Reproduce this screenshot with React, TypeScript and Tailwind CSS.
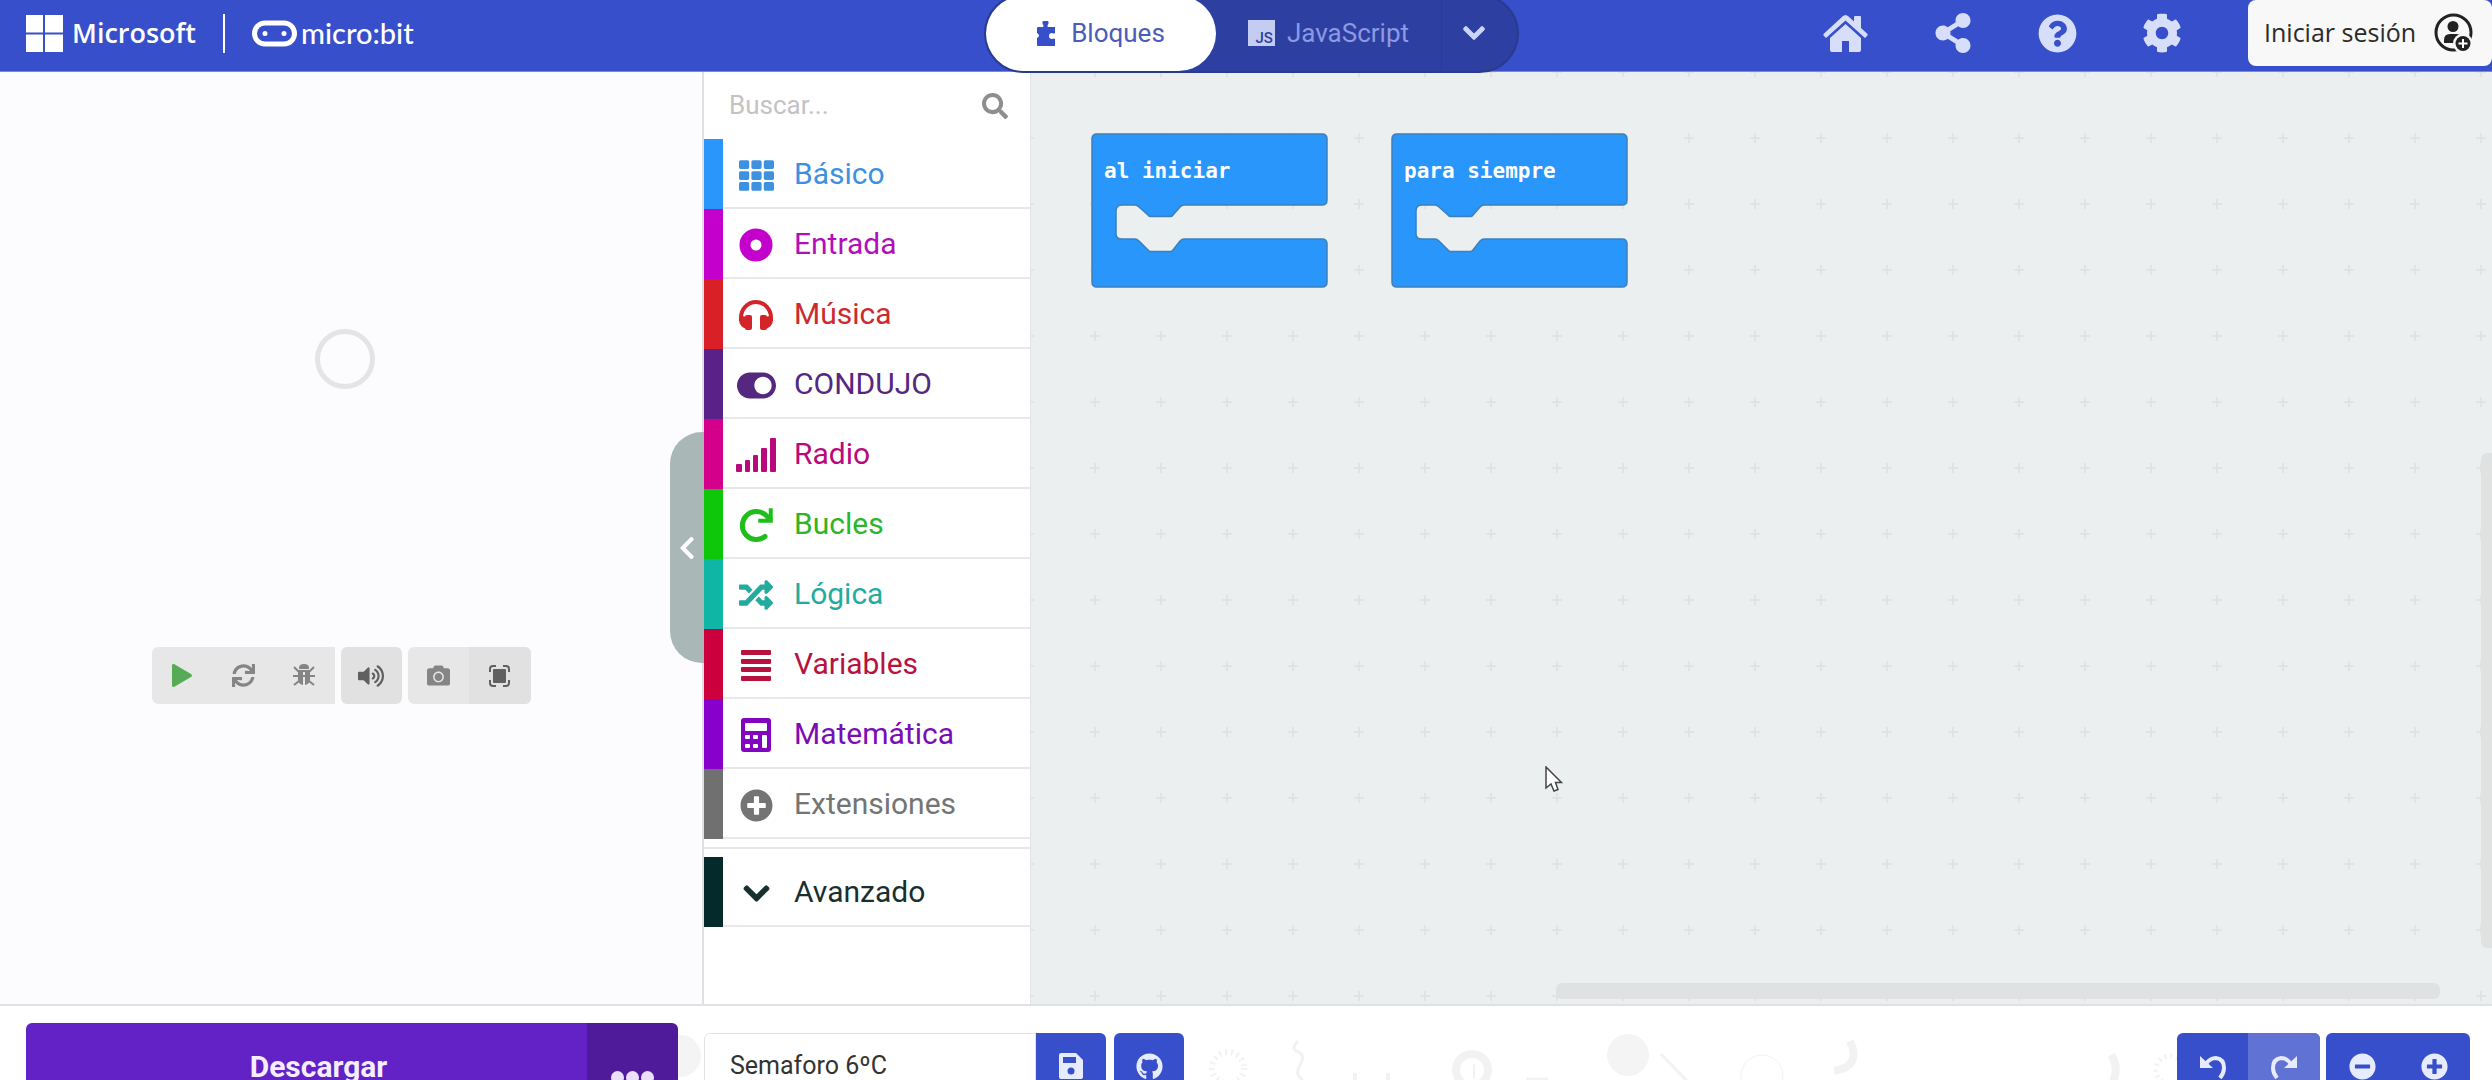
import type { ReactNode } from 'react';
import {
  FaCamera,
  FaChevronDown,
  FaChevronLeft,
  FaCog,
  FaGithub,
  FaMinusCircle,
  FaPlusCircle,
  FaQuestionCircle,
  FaRandom,
  FaSearch,
  FaShareAlt,
  FaSync,
  FaTh,
  FaToggleOn,
  FaVolumeUp,
} from 'react-icons/fa';

interface Category {
  name: string;
  text: string;
  bar: string;
  icon: ReactNode;
}

const categories: Category[] = [
  { name: 'Básico', text: 'text-[#3d91e0]', bar: 'bg-[#2a96fb]', icon: <FaTh size={35} /> },
  { name: 'Entrada', text: 'text-[#b20fb8]', bar: 'bg-[#c400cc]', icon: <DiscIcon /> },
  { name: 'Música', text: 'text-[#cd2a2e]', bar: 'bg-[#d82026]', icon: <HeadphonesIcon /> },
  { name: 'CONDUJO', text: 'text-[#56277f]', bar: 'bg-[#5a2189]', icon: <FaToggleOn size={39} /> },
  { name: 'Radio', text: 'text-[#b80a7c]', bar: 'bg-[#d4008c]', icon: <SignalIcon /> },
  { name: 'Bucles', text: 'text-[#2cb42a]', bar: 'bg-[#0fc70a]', icon: <LoopIcon /> },
  { name: 'Lógica', text: 'text-[#23ab9f]', bar: 'bg-[#0fb5a5]', icon: <FaRandom size={34} /> },
  { name: 'Variables', text: 'text-[#b8123f]', bar: 'bg-[#cc003c]', icon: <LinesIcon /> },
  { name: 'Matemática', text: 'text-[#7a0db4]', bar: 'bg-[#8800cc]', icon: <CalculatorIcon /> },
  { name: 'Extensiones', text: 'text-[#747474]', bar: 'bg-[#707070]', icon: <FaPlusCircle size={33} /> },
];

function DiscIcon() {
  return (
    <svg width="34" height="34" viewBox="0 0 34 34">
      <circle cx="17" cy="17" r="11" fill="none" stroke="#c400cc" strokeWidth="11" />
    </svg>
  );
}

function HeadphonesIcon() {
  return (
    <svg width="34" height="31" viewBox="0 0 34 31" fill="#d3242a">
      <path d="M2 21V17.500A15 15.500 0 0 1 32 17.500V21" fill="none" stroke="#d3242a" strokeWidth="4" />
      <rect x="6" y="15" width="7" height="15" rx="2" />
      <rect x="21" y="15" width="7" height="15" rx="2" />
      <path d="M8 29Q0 27 0 19L3 16L8 17ZM26 29Q34 27 34 19L31 16L26 17Z" />
    </svg>
  );
}

function SignalIcon() {
  return (
    <svg width="40" height="34" viewBox="0 0 40 34" fill="currentColor">
      <rect x="0" y="26" width="6" height="8" rx="1" />
      <rect x="9" y="22" width="5" height="12" rx="1" />
      <rect x="17" y="17" width="5" height="17" rx="1" />
      <rect x="25" y="10" width="6" height="24" rx="1" />
      <rect x="34" y="0" width="6" height="34" rx="1" />
    </svg>
  );
}

function LoopIcon() {
  return (
    <svg width="34" height="34" viewBox="0 0 34 34" fill="none" stroke="#1fbe1b">
      <path d="M26 28.500A14 14 0 1 1 26 6.500L31 11" strokeWidth="5" strokeLinecap="round" />
      <path d="M33 1V14H20V11.500H27L30.500 8V1Z" fill="#1fbe1b" strokeWidth="1.500" />
    </svg>
  );
}

function LinesIcon() {
  return (
    <svg width="30" height="31" viewBox="0 0 30 31" fill="currentColor">
      <rect y="0" width="30" height="5" rx="1" />
      <rect y="9" width="30" height="5" rx="1" />
      <rect y="17" width="30" height="5" rx="1" />
      <rect y="26" width="30" height="5" rx="1" />
    </svg>
  );
}

function CalculatorIcon() {
  return (
    <svg width="30" height="34" viewBox="0 0 30 34">
      <rect width="30" height="34" rx="3" fill="#8206bf" />
      <g fill="#fff">
        <rect x="4" y="5" width="22" height="8" rx="1" />
        <rect x="4" y="17" width="5" height="4" rx="1" />
        <rect x="12" y="17" width="5" height="4" rx="1" />
        <rect x="4" y="26" width="5" height="4" rx="1" />
        <rect x="12" y="26" width="5" height="4" rx="1" />
        <rect x="21" y="17" width="5" height="13" rx="1" />
      </g>
    </svg>
  );
}

function BlockShape() {
  return (
    <svg width="238" height="156" viewBox="0 0 238 156">
      <path
        d="M6 1H231Q236 1 236 6V67Q236 72 231 72H93Q91 72 89 74L82 82Q81 83.500 79 83.500H60Q58 83.500 57 82L48 74Q46 72 44 72H31Q25 72 25 78V101Q25 106 31 106H44Q46 106 48 108L57 117Q58 118.500 60 118.500H79Q81 118.500 82 117L89 108Q91 106 93 106H231Q236 106 236 111V149Q236 154 231 154H6Q1 154 1 149V6Q1 1 6 1Z"
        fill="#2896fa"
        stroke="#3b80bd"
        strokeWidth="1.500"
      />
    </svg>
  );
}

function Block({ label }: { label: string }) {
  return (
    <div className="relative h-[156px] w-[238px]">
      <BlockShape />
      <span className="absolute top-6 left-[13px] font-['DejaVu_Sans_Mono',monospace] text-[21px] leading-7 font-bold whitespace-nowrap text-white">
        {label}
      </span>
    </div>
  );
}

function Header() {
  return (
    <header className="relative z-10 h-[72px] shrink-0 border-b border-[#7f8cb8] bg-[#374fcb]">
      <div className="flex h-[66px] items-center">
        <div className="flex flex-1 items-center pl-[11px] text-white">
          <svg className="ml-[15px]" width="37" height="37" viewBox="0 0 37 37" fill="#fff">
            <path d="M0 0H17V17.500H0ZM19 0H37V17.500H19ZM0 19.500H17V37H0ZM19 19.500H37V37H19Z" />
          </svg>
          <span className="ml-[9px] font-['Open_Sans',sans-serif] text-[27px] leading-8 font-semibold">Microsoft</span>
          <span className="ml-[27px] h-[39px] w-[2px] bg-white" />
          <svg className="ml-[27px]" width="45" height="27" viewBox="0 0 45 27">
            <rect x="2.500" y="3" width="40" height="21" rx="10.500" fill="none" stroke="#fff" strokeWidth="5" />
            <circle cx="13" cy="13.500" r="2.500" fill="#fff" />
            <circle cx="32" cy="13.500" r="2.500" fill="#fff" />
          </svg>
          <span className="ml-1 font-['Lato',sans-serif] text-[29px] leading-8 font-medium">micro:bit</span>
        </div>

        {/* Editor switch */}
        <div className="flex h-[79px] w-[535px] shrink-0 rounded-full border-2 border-[#293a8f] bg-[#2d3fa0]">
          <button className="flex h-full w-[230px] items-center justify-center gap-4 rounded-full bg-white text-[26px] text-[#4a5cbc]">
            <svg width="18" height="25" viewBox="0 0 18 25" fill="#374fcb">
              <path d="M1 6H6Q7 5 6 3.500A3 3 0 1 1 11 3.500Q10 5 11 6H18V12Q17 13 15 12A3 3 0 1 0 15 18Q17 17 18 18V25H1Q0 25 0 24V17Q2 16 2 14.500T0 12V7Q0 6 1 6Z" />
            </svg>
            Bloques
          </button>
          <button className="flex h-full w-[226px] items-center justify-center gap-3 border-r border-[#293a8f] text-[26px] text-[#8d99e0]">
            <span className="flex h-[26px] w-[27px] items-end justify-end bg-[#c5ccf1] pr-[2px] text-[15px] leading-4 font-medium text-[#2d3fa0]">
              JS
            </span>
            JavaScript
          </button>
          <button className="flex h-full flex-1 items-center pl-[20px] text-[#ccd4f8]" aria-label="Más lenguajes">
            <FaChevronDown size={24} stroke="currentColor" strokeWidth={24} />
          </button>
        </div>

        <div className="flex h-full flex-1 items-center justify-end text-[#d7def9]">
          <div className="mr-[66px] flex items-center gap-[65px]">
            <button aria-label="Inicio">
              <HomeIcon />
            </button>
            <button aria-label="Compartir">
              <FaShareAlt size={40} />
            </button>
            <button aria-label="Ayuda">
              <FaQuestionCircle size={39} />
            </button>
            <button aria-label="Configuración">
              <FaCog size={40} />
            </button>
          </div>
          <button className="flex h-full w-[244px] items-center justify-between rounded-lg bg-[#f8f8f8] pr-[18px] pl-4 font-['Open_Sans',sans-serif] text-[25px] text-[#2b2b2b]">
            Iniciar sesión
            <UserIcon />
          </button>
        </div>
      </div>
    </header>
  );
}

function HomeIcon() {
  return (
    <svg width="45" height="37" viewBox="0 0 45 37" fill="currentColor">
      <path d="M22.500 9L38 23V35Q38 37 36 37H26V26H19V37H9Q7 37 7 35V23Z" />
      <path d="M22.500 0Q24 0 25.500 1.500L31 6.500V2Q31 1 32 1H37Q38 1 38 2V13L44.500 19Q45 20 44 21L42 23L22.500 5.500L3 23L1 21Q0 20 .500 19L19.500 1.500Q21 0 22.500 0Z" />
    </svg>
  );
}

function UserIcon() {
  return (
    <svg width="40" height="40" viewBox="0 0 40 40">
      <circle cx="19.500" cy="19.500" r="17.500" fill="none" stroke="#222" strokeWidth="3" />
      <circle cx="19" cy="13.500" r="5.500" fill="#222" />
      <path d="M10 30V27Q10 21 16 21H22Q26 21 27 23Q21 26 21 30Z" fill="#222" />
      <circle cx="29" cy="30.500" r="10" fill="#f8f8f8" />
      <circle cx="29" cy="30.500" r="7.500" fill="#222" />
      <path d="M29 26V35M24.500 30.500H33.500" stroke="#fff" strokeWidth="2" />
    </svg>
  );
}

function Simulator() {
  return (
    <section className="relative flex w-[704px] shrink-0 flex-col items-center border-r-2 border-[#dfe0e4] bg-[#fcfcfe] pt-[257px] pr-3">
      <div className="size-[60px] rounded-full border-[5px] border-[#e4e4e6]" />
      <div className="mt-[258px] mr-2 flex gap-[6px] text-[#858585]">
        <div className="flex h-[57px] overflow-hidden rounded-l-md bg-[#e7e7e8]">
          <button className="flex w-[61px] items-center justify-center text-[#57ab57]" aria-label="Iniciar">
            <svg width="20" height="23" viewBox="0 0 20 23" fill="currentColor">
              <path d="M0 1Q0 0 2 0L19 10Q21 11.500 19 13L2 23Q0 23 0 22Z" />
            </svg>
          </button>
          <button className="flex w-[61px] items-center justify-center" aria-label="Reiniciar">
            <FaSync size={23} />
          </button>
          <button className="flex w-[61px] items-center justify-center" aria-label="Depurar">
            <BugIcon />
          </button>
        </div>
        <button className="flex h-[57px] w-[61px] items-center justify-center rounded-md bg-[#e1e1e2] text-[#606060]" aria-label="Sonido">
          <FaVolumeUp size={26} />
        </button>
        <div className="flex h-[57px] overflow-hidden rounded-md bg-[#e7e7e8]">
          <button className="flex w-[61px] items-center justify-center" aria-label="Captura">
            <FaCamera size={23} />
          </button>
          <button className="flex w-[62px] items-center justify-center bg-[#e1e1e2] text-[#606060]" aria-label="Pantalla completa">
            <svg width="21" height="22" viewBox="0 0 21 22">
              <rect x="4" y="4" width="13" height="14" rx="1" fill="currentColor" />
              <path
                d="M1 7V4Q1 1 4 1H7M14 1H17Q20 1 20 4V7M20 15V18Q20 21 17 21H14M7 21H4Q1 21 1 18V15"
                fill="none"
                stroke="currentColor"
                strokeWidth="2"
              />
            </svg>
          </button>
        </div>
      </div>
      <button
        className="absolute top-[360px] right-[-2px] flex h-[231px] w-[34px] items-center justify-center rounded-l-[32px] bg-[#a9b8b7] text-white"
        aria-label="Ocultar simulador"
      >
        <FaChevronLeft size={26} />
      </button>
    </section>
  );
}

function BugIcon() {
  return (
    <svg width="22" height="23" viewBox="0 0 22 23" fill="none" stroke="currentColor" strokeWidth="2">
      <path d="M7 4Q7 1 11 1T15 4Z" fill="currentColor" />
      <path d="M5 7H10V21Q5 20 5 15ZM12 7H17V15Q17 20 12 21Z" fill="currentColor" stroke="none" />
      <path d="M1 3L5 7H17L21 3M0 12H22M1 21L6 17M21 21L16 17" />
    </svg>
  );
}

function CategoryRow({ name, text, bar, icon }: Category) {
  return (
    <li>
      <button className={`flex h-[70px] w-full ${text}`}>
        <span className={`h-full w-[19px] ${bar}`} />
        <span className="flex h-full flex-1 items-center border-b-2 border-[#e8e8ea]">
          <span className="flex w-[66px] justify-center pt-1">{icon}</span>
          <span className="pt-[2px] pl-[5px] text-[30px] leading-9">{name}</span>
        </span>
      </button>
    </li>
  );
}

function Toolbox() {
  return (
    <nav className="w-[326px] shrink-0 bg-white">
      <label className="flex h-[67px] items-center pr-[22px] pl-[25px]">
        <input
          className="min-w-0 flex-1 text-[26px] outline-none placeholder:text-[#c3c3c5]"
          placeholder="Buscar..."
          aria-label="Buscar"
        />
        <FaSearch size={26} className="text-[#8e8e8e]" />
      </label>
      <ul>
        {categories.map((c) => (
          <CategoryRow key={c.name} {...c} />
        ))}
      </ul>
      <div className="my-2 h-[2px] bg-[#e8e8ea]" />
      <ul>
        <CategoryRow
          name="Avanzado"
          text="text-[#17302f]"
          bar="bg-[#042a2b]"
          icon={<FaChevronDown size={29} stroke="currentColor" strokeWidth={20} />}
        />
      </ul>
    </nav>
  );
}

function Workspace() {
  return (
    <main className="relative flex-1 overflow-hidden border-l border-[#e0e3e5] bg-[#ebeff0]">
      <svg className="absolute inset-0 h-full w-full">
        <defs>
          <pattern id="grid" x="31" y="33" width="66" height="66" patternUnits="userSpaceOnUse">
            <path d="M33 28V38M28 33H38" stroke="#dde1e2" strokeWidth="1.500" />
          </pattern>
        </defs>
        <rect width="100%" height="100%" fill="url(#grid)" />
      </svg>
      <div className="relative flex gap-[62px] pt-[61px] pl-[60px]">
        <Block label="al iniciar" />
        <Block label="para siempre" />
      </div>

      {/* Scrollbars */}
      <div className="absolute top-[381px] right-0 h-[495px] w-[11px] rounded-l-md bg-[#e0e1e1]" />
      <div className="absolute right-[52px] bottom-[5px] h-4 w-[884px] rounded-md bg-[#e0e1e1]" />

      {/* Pointer */}
      <svg className="absolute top-[694px] left-[514px]" width="18" height="27" viewBox="0 0 18 27">
        <path d="M1 1V22L6 18L9 25L13 23.500L10.500 16.500H16.500Z" fill="#fff" stroke="#444" strokeWidth="1.500" />
      </svg>
    </main>
  );
}

function FooterShapes() {
  return (
    <svg className="absolute inset-0 h-full w-full" fill="none" stroke="#f2f2f3">
      <circle cx="680" cy="50" r="21" fill="#f4f4f5" stroke="none" />
      <circle cx="1228" cy="62" r="16" strokeWidth="6" strokeDasharray="2 4" />
      <path d="M1298 35Q1290 43 1298 46T1300 59T1303 74" strokeWidth="3" />
      <path d="M1355 67V76M1388 67V76" strokeWidth="4" />
      <circle cx="1472" cy="64" r="16" strokeWidth="8" />
      <path d="M1474 58V72" strokeWidth="2" />
      <path d="M1526 74H1548" strokeWidth="5" />
      <circle cx="1628" cy="49" r="21" fill="#f4f4f5" stroke="none" />
      <path d="M1661 48L1688 76" strokeWidth="3" />
      <circle cx="1762" cy="70" r="21" strokeWidth="1" />
      <path d="M1850 35Q1862 60 1834 65" strokeWidth="8" />
      <path d="M2111 49Q2120 62 2112 78" strokeWidth="8" />
      <circle cx="2170" cy="64" r="14" strokeWidth="5" strokeDasharray="2 4" />
    </svg>
  );
}

function Footer() {
  return (
    <footer className="relative h-[76px] shrink-0 overflow-hidden border-t-2 border-[#dfe2e5] bg-white">
      <FooterShapes />
      <div className="relative flex items-start pr-[22px] pl-[26px]">
        <div className="mt-[17px] flex h-[88px] w-[652px] overflow-hidden rounded-md">
          <button className="flex-1 bg-[#6322c5] pl-6 text-[30px] leading-8 font-bold text-[#f4eeff]">Descargar</button>
          <button className="flex w-[91px] items-center justify-center gap-[2px] bg-[#4f1b9b] pt-5" aria-label="Más opciones">
            <span className="size-[13px] rounded-full bg-[#eadffc]" />
            <span className="size-[13px] rounded-full bg-[#eadffc]" />
            <span className="size-[13px] rounded-full bg-[#eadffc]" />
          </button>
        </div>
        <div className="mt-[27px] ml-[26px] flex h-[66px]">
          <input
            className="w-[332px] rounded-l-md border border-[#e3e3e5] bg-white pl-[25px] text-[25px] text-[#333] outline-none"
            defaultValue="Semaforo 6ºC"
            aria-label="Nombre del proyecto"
          />
          <button className="flex w-[70px] items-center justify-center rounded-r-md bg-[#374fcb]" aria-label="Guardar">
            <svg width="24" height="26" viewBox="0 0 24 26">
              <path d="M2 0H17L24 7V24Q24 26 22 26H2Q0 26 0 24V2Q0 0 2 0Z" fill="#e6ebfd" />
              <rect x="4" y="4" width="13" height="6" fill="#374fcb" />
              <circle cx="12" cy="18" r="3.500" fill="#374fcb" />
            </svg>
          </button>
          <button className="ml-2 flex w-[70px] items-center justify-center rounded-md bg-[#374fcb] text-[#e6ebfd]" aria-label="GitHub">
            <FaGithub size={27} />
          </button>
        </div>
        <div className="mt-[27px] ml-auto flex h-[66px] gap-[6px] text-[#e6ebfd]">
          <div className="flex overflow-hidden rounded-md bg-[#374fcb]">
            <button className="flex w-[71px] items-center justify-center" aria-label="Deshacer">
              <UndoIcon />
            </button>
            <button className="flex w-[72px] items-center justify-center bg-[#6172d5]" aria-label="Rehacer">
              <span className="-scale-x-100">
                <UndoIcon />
              </span>
            </button>
          </div>
          <div className="flex overflow-hidden rounded-md bg-[#374fcb]">
            <button className="flex w-[72px] items-center justify-center" aria-label="Alejar">
              <FaMinusCircle size={27} />
            </button>
            <button className="flex w-[72px] items-center justify-center" aria-label="Acercar">
              <FaPlusCircle size={27} />
            </button>
          </div>
        </div>
      </div>
    </footer>
  );
}

function UndoIcon() {
  return (
    <svg width="26" height="26" viewBox="0 0 26 26">
      <path d="M6 11Q10 5 16 5Q24 6 24 15Q24 20 20 25" fill="none" stroke="currentColor" strokeWidth="4" />
      <path d="M0 3V15H13Z" fill="currentColor" />
    </svg>
  );
}

export default function App() {
  return (
    <div className="flex h-screen flex-col overflow-hidden bg-white font-['Roboto',sans-serif]">
      <Header />
      <div className="flex min-h-0 flex-1">
        <Simulator />
        <Toolbox />
        <Workspace />
      </div>
      <Footer />
    </div>
  );
}
